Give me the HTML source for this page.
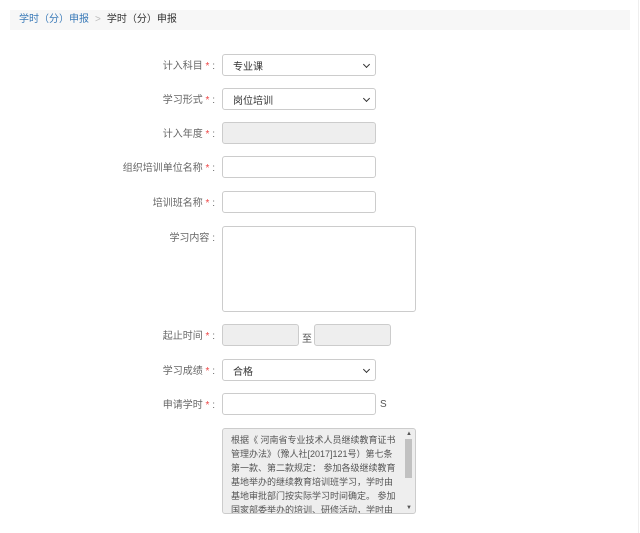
<!DOCTYPE html>
<html><head><meta charset="utf-8"><style>
*{box-sizing:border-box;margin:0;padding:0}
body{width:640px;height:533px;background:#fff;font-family:"Liberation Sans","Noto Sans CJK SC",sans-serif;font-size:10px;color:#555;position:relative;overflow:hidden}
.bc{position:absolute;left:10px;top:10px;width:620px;height:20px;background:#f7f7f7;line-height:20px;padding-left:9px;font-size:10px}
.bc a{color:#3a7ab8;text-decoration:none}
.bc .s{color:#bbb;margin:0 6px}
.bc b{font-weight:normal;color:#333}
.lbl{position:absolute;right:425px;color:#666;white-space:nowrap;font-size:10px;line-height:12px;margin-top:2px}
.lbl i{color:#e44;font-style:normal}
.f{position:absolute;left:222px;width:154px;height:22px;border:1px solid #ccc;border-radius:3px;background:#fff;font-size:10px;color:#333;padding-left:10px;display:flex;align-items:center}
.dis{background:#eee}
.sel::after{content:"";position:absolute;right:6px;top:7px;width:4px;height:4px;border-right:1.3px solid #333;border-bottom:1.3px solid #333;transform:rotate(45deg)}
.rl{position:absolute;right:1px;top:0;width:1px;height:533px;background:#eee}
</style></head><body>
<div class="bc"><a>学时（分）申报</a><span class="s">&gt;</span><b>学时（分）申报</b></div>
<div class="lbl" style="top:59px">计入科目 <i>*</i>&nbsp;:</div>
<div class="f sel" style="top:54px">专业课</div>
<div class="lbl" style="top:93px">学习形式 <i>*</i>&nbsp;:</div>
<div class="f sel" style="top:88px">岗位培训</div>
<div class="lbl" style="top:127px">计入年度 <i>*</i>&nbsp;:</div>
<div class="f dis" style="top:122px"></div>
<div class="lbl" style="top:161px">组织培训单位名称 <i>*</i>&nbsp;:</div>
<div class="f" style="top:156px"></div>
<div class="lbl" style="top:196px">培训班名称 <i>*</i>&nbsp;:</div>
<div class="f" style="top:191px"></div>
<div class="lbl" style="top:231px">学习内容&nbsp;:</div>
<div class="f" style="top:226px;width:194px;height:86px"></div>
<div class="lbl" style="top:329px">起止时间 <i>*</i>&nbsp;:</div>
<div class="f dis" style="top:324px;width:77px"></div>
<div style="position:absolute;left:302px;top:330px;color:#555">至</div>
<div class="f dis" style="top:324px;left:314px;width:77px"></div>
<div class="lbl" style="top:364px">学习成绩 <i>*</i>&nbsp;:</div>
<div class="f sel" style="top:359px">合格</div>
<div class="lbl" style="top:398px">申请学时 <i>*</i>&nbsp;:</div>
<div class="f" style="top:393px"></div>
<div style="position:absolute;left:380px;top:399px;color:#555">S</div>
<div style="position:absolute;left:222px;top:428px;width:194px;height:86px;border:1px solid #ccc;border-radius:3px;background:#eee;overflow:hidden">
<div style="padding:4px 14px 0 8px;font-size:9px;line-height:14px;color:#555">根据《 河南省专业技术人员继续教育证书管理办法》（豫人社[2017]121号）第七条第一款、第二款规定： 参加各级继续教育基地举办的继续教育培训班学习，学时由基地审批部门按实际学习时间确定。 参加国家部委举办的培训、研修活动，学时由主办单位根据活动时间确定</div>
<div style="position:absolute;right:3px;top:10px;width:7px;height:39px;background:#c1c1c1"></div>
<div style="position:absolute;right:3px;top:2px;font-size:6px;color:#555">▲</div>
<div style="position:absolute;right:3px;bottom:2px;font-size:6px;color:#555">▼</div>
</div>
<div class="rl"></div>
</body></html>
